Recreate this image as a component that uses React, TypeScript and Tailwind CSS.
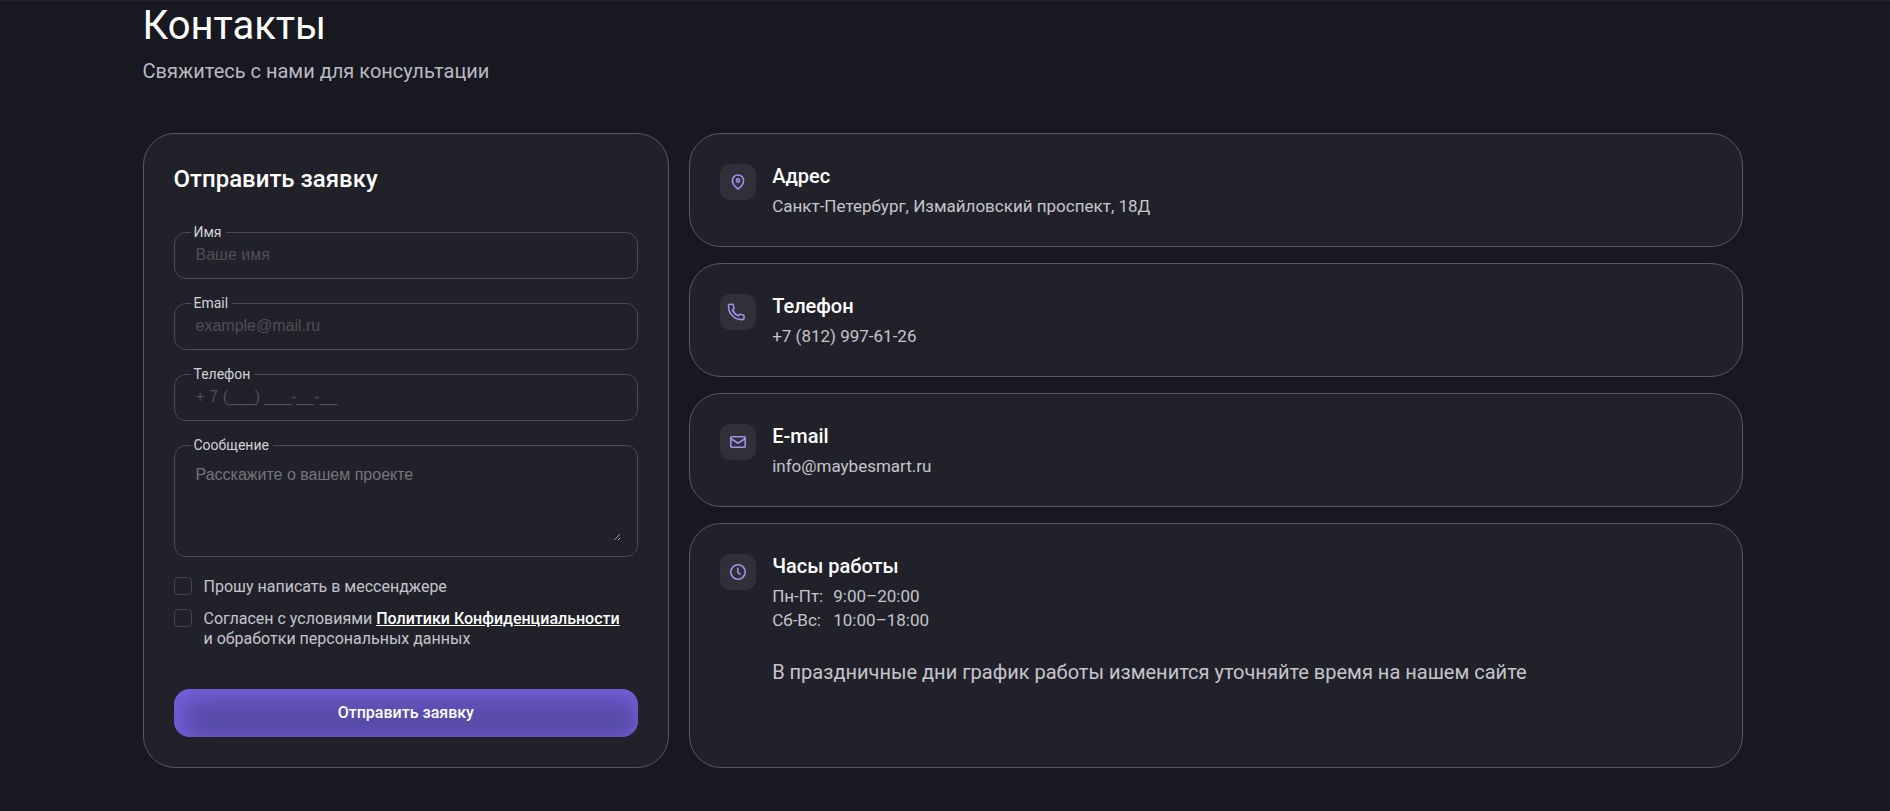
import type { ReactNode } from 'react';

function PinIcon() {
  return (
    <svg className="w-5 h-5" viewBox="0 0 20 20" fill="none" stroke="currentColor" strokeWidth={1.6} strokeLinejoin="round">
      <path d="M10 17c3.400-2.600 5.600-5.200 5.600-8.300A5.600 5.600 0 0 0 10 3a5.600 5.600 0 0 0-5.600 5.700c0 3.100 2.200 5.700 5.600 8.300Z" />
      <circle cx="10" cy="8.500" r="1.600" />
    </svg>
  );
}

function PhoneIcon() {
  return (
    <svg className="w-5 h-5 mr-1" viewBox="0 0 20 20" fill="none" stroke="currentColor" strokeWidth={1.6} strokeLinejoin="round">
      <path d="M2.500 4.600c0 7.200 5.800 13 13 13h1.200c.7 0 1.300-.6 1.300-1.300v-2.200c0-.5-.3-.9-.8-1l-3-.8c-.4-.1-.8.1-1 .4l-.8 1.100c-2.600-1-4.900-3.300-5.900-5.900l1.100-.8c.3-.2.5-.6.4-1l-.8-3c-.1-.5-.5-.8-1-.8H4c-.8 0-1.500.6-1.500 1.300v1Z" />
    </svg>
  );
}

function MailIcon() {
  return (
    <svg className="w-5 h-5" viewBox="0 0 20 20" fill="none" stroke="currentColor" strokeWidth={1.6} strokeLinejoin="round" strokeLinecap="round">
      <rect x="2.750" y="4.750" width="14.500" height="10.500" rx="1.200" />
      <path d="M3 6.800l7 4.400 7-4.400" />
    </svg>
  );
}

function ClockIcon() {
  return (
    <svg className="w-5 h-5" viewBox="0 0 20 20" fill="none" stroke="currentColor" strokeWidth={1.6} strokeLinecap="round">
      <circle cx="10" cy="10" r="7.250" />
      <path d="M9.800 6.200v4.200l2.200 1.800" />
    </svg>
  );
}

function InfoCard({ icon, title, children }: { icon: ReactNode; title: string; children: ReactNode }) {
  return (
    <article className="flex items-start gap-4 p-[30px] pb-7 rounded-[32px] border border-[#58585f] bg-[#21212a] last:flex-1">
      <span className="w-9 h-9 shrink-0 rounded-[10px] flex items-center justify-center bg-[#303038] text-[#a291ea]">
        {icon}
      </span>
      <div className="text-[17px] leading-6 text-[#c5c5cb]">
        <h3 className="text-xl leading-6 mb-1.5 font-medium text-white">{title}</h3>
        {children}
      </div>
    </article>
  );
}

function Field({ id, label, children }: { id: string; label: string; children: ReactNode }) {
  return (
    <fieldset className="min-w-0 px-4 pb-[10px] rounded-xl border border-[#4b4b53]">
      <legend className="pl-[3px] pr-1 text-sm leading-5 text-[#d3d3d9]">
        <label htmlFor={id}>{label}</label>
      </legend>
      {children}
    </fieldset>
  );
}

const inputClass =
  "block w-full h-[26px] px-[5px] bg-transparent outline-none font-['Liberation_Sans',sans-serif] text-base text-white placeholder:text-[#4f4f56]";
const checkClass =
  "appearance-none w-[18px] h-[18px] shrink-0 rounded-sm border border-[#45454d] checked:bg-[#6a59c9]";

export default function App() {
  return (
    <main className="min-h-screen pr-[5px] border-t border-[#22222a] bg-[#181820] font-['Roboto',sans-serif] text-white">
      <div className="max-w-[1600px] mx-auto">
        <h1 className="text-[40px] leading-[50px] font-normal">Контакты</h1>
        <p className="mt-2 text-xl leading-6 text-[#b9b9c0]">Свяжитесь с нами для консультации</p>

        <div className="mt-[50px] grid grid-cols-[1fr_2fr] gap-5">
          <form className="flex flex-col p-[30px] rounded-[32px] border border-[#58585f] bg-[#21212a]">
            <h2 className="mb-7 text-2xl leading-[30px] font-medium">Отправить заявку</h2>

            <div className="flex flex-col gap-[14px]">
              <Field id="name" label="Имя">
                <input id="name" type="text" placeholder="Ваше имя" className={inputClass} />
              </Field>
              <Field id="email" label="Email">
                <input id="email" type="email" placeholder="example@mail.ru" className={inputClass} />
              </Field>
              <Field id="phone" label="Телефон">
                <input id="phone" type="tel" placeholder="+ 7 (___) ___-__-__" className={inputClass} />
              </Field>
              <Field id="message" label="Сообщение">
                <textarea
                  id="message"
                  placeholder="Расскажите о вашем проекте"
                  className="block w-full h-[86px] mb-[5px] px-[5px] pt-2 resize bg-transparent outline-none font-['Liberation_Sans',sans-serif] text-base text-white placeholder:text-[#75757a]"
                />
              </Field>
            </div>

            <div className="mt-5 flex flex-col gap-3 text-base leading-5 text-[#c5c5cb]">
              <div className="flex items-start gap-3">
                <input id="messenger" type="checkbox" className={checkClass} />
                <label htmlFor="messenger">Прошу написать в мессенджере</label>
              </div>
              <div className="flex items-start gap-3">
                <input id="policy" type="checkbox" className={checkClass} />
                <label htmlFor="policy">
                  Согласен с условиями{' '}
                  <a href="#policy" className="font-medium text-white underline">Политики Конфиденциальности</a>
                  <br />
                  и обработки персональных данных
                </label>
              </div>
            </div>

            <button
              type="submit"
              className="mt-10 h-12 rounded-2xl bg-[#574ba6] shadow-[inset_8px_8px_28px_#7460dd,inset_-2px_2px_14px_#6a5ac8] text-base font-medium text-white"
            >
              Отправить заявку
            </button>
          </form>

          <div className="flex flex-col gap-4">
            <InfoCard icon={<PinIcon />} title="Адрес">
              <p>Санкт-Петербург, Измайловский проспект, 18Д</p>
            </InfoCard>
            <InfoCard icon={<PhoneIcon />} title="Телефон">
              <p>+7 (812) 997-61-26</p>
            </InfoCard>
            <InfoCard icon={<MailIcon />} title="E-mail">
              <p>info@maybesmart.ru</p>
            </InfoCard>
            <InfoCard icon={<ClockIcon />} title="Часы работы">
              <dl className="grid grid-cols-[max-content_max-content] gap-x-[10px]">
                <dt>Пн-Пт:</dt>
                <dd>9:00–20:00</dd>
                <dt>Сб-Вс:</dt>
                <dd>10:00–18:00</dd>
              </dl>
              <p className="mt-7 text-xl leading-6">
                В праздничные дни график работы изменится уточняйте время на нашем сайте
              </p>
            </InfoCard>
          </div>
        </div>
      </div>
    </main>
  );
}
